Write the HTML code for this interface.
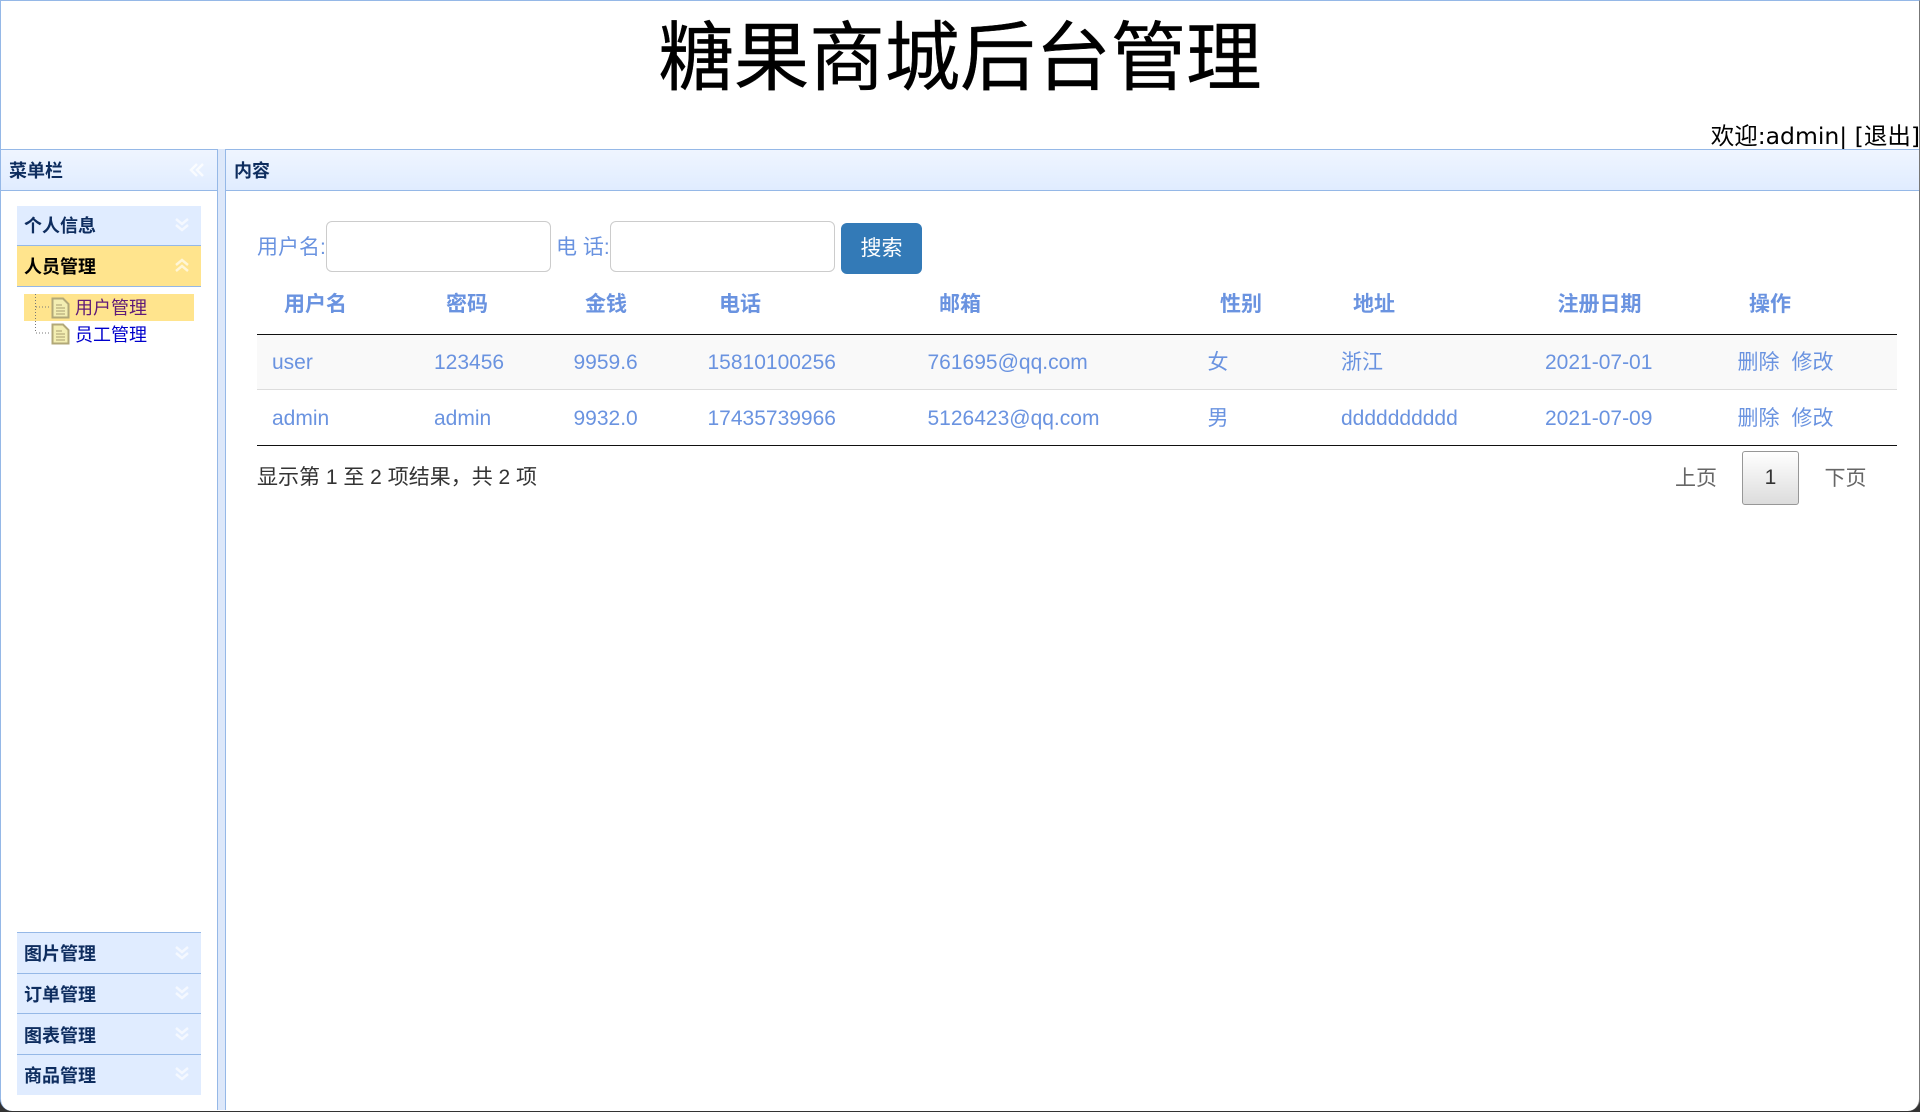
<!DOCTYPE html>
<html lang="zh">
<head>
<meta charset="utf-8">
<title>糖果商城后台管理</title>
<style>
html,body{margin:0;padding:0;background:#333;}
body{width:1920px;height:1112px;position:relative;overflow:hidden;font-family:"Liberation Sans","Noto Sans CJK SC",sans-serif;}
.a{position:absolute;white-space:nowrap;}
#page{position:absolute;left:0;top:0;width:1918px;height:1110px;background:#fff;border-left:1px solid #95b8e7;border-top:1px solid #95b8e7;border-right:1px solid #777;border-radius:0 0 12px 12px;}
.t{line-height:30px;height:30px;}
.head{background:linear-gradient(to bottom,#eff5ff,#e0ecff);border-top:1px solid #95b8e7;border-bottom:1px solid #95b8e7;height:40px;top:149px;}
.hd{font-weight:bold;font-size:18px;color:#0e2d5f;}
.acc{left:17px;width:184px;background:#e0ecff;}
.acc.on{background:#ffe48d;}
.line{border-top:1px solid #95b8e7;}
.c{color:#6a93e0;font-size:21px;}
.th{color:#6a93e0;font-size:21px;font-weight:bold;}
input{position:absolute;box-sizing:border-box;border:1px solid #ccc;border-radius:6px;background:#fff;height:51px;width:225px;top:221px;margin:0;padding:0;}
</style>
</head>
<body>
<div id="page"></div>

<div class="a" style="left:0;top:13px;width:1920px;text-align:center;font-size:75.400px;line-height:90px;color:#000;-webkit-text-stroke:.4px #000;">糖果商城后台管理</div>
<div class="a" style="right:0;top:121px;font-family:'DejaVu Sans','Noto Sans CJK SC',sans-serif;font-size:23.500px;line-height:30px;color:#000;">欢迎:admin| [退出]</div>

<!-- panels -->
<div class="a head" style="left:1px;width:216px;"></div>
<div class="a head" style="left:225px;width:1694px;"></div>
<div class="a" style="left:217px;top:149px;width:7px;height:961px;background:#dde8fa;border-left:1px solid #95b8e7;border-right:1px solid #95b8e7;"></div>
<div class="a t hd" style="left:9px;top:156px;">菜单栏</div>
<div class="a t hd" style="left:234px;top:156px;">内容</div>
<svg class="a" style="left:189px;top:162px;" width="16" height="16" viewBox="0 0 16 16" fill="none" stroke="#fff" stroke-opacity=".75" stroke-width="2.500"><path d="M8 2L2 8l6 6M14 2L8 8l6 6"/></svg>

<!-- accordion -->
<div class="a acc" style="top:206px;height:39px;"></div>
<div class="a acc on line" style="top:245px;height:40px;"></div>
<div class="a" style="left:17px;top:286px;width:184px;height:1px;background:#95b8e7;"></div>
<div class="a t hd" style="left:24px;top:211px;">个人信息</div>
<div class="a t hd" style="left:24px;top:252px;color:#000;">人员管理</div>
<svg class="a" style="left:174px;top:217px;" width="16" height="16" viewBox="0 0 16 16" fill="none" stroke="#fff" stroke-opacity=".65" stroke-width="2.500"><path d="M2 2l6 5 6-5M2 8l6 5 6-5"/></svg>
<svg class="a" style="left:174px;top:257px;" width="16" height="16" viewBox="0 0 16 16" fill="none" stroke="#fff" stroke-opacity=".65" stroke-width="2.500"><path d="M2 8l6-5 6 5M2 14l6-5 6 5"/></svg>

<div class="a" style="left:24px;top:294px;width:170px;height:27px;background:#ffe48d;"></div>
<svg class="a" style="left:30px;top:294px;" width="42" height="54" viewBox="0 0 42 54" fill="none">
<path d="M5.500 0V39M6 13H20M6 39H20" stroke="#777" stroke-dasharray="1 2"/>
<path d="M22.500 4.500H33L38.500 10V23.500H22.500Z" fill="#f3eeb2" stroke="#b2a878" stroke-width="2"/>
<path d="M26 11H32M26 14H35M26 17H35M26 20H35" stroke="#a89e70"/>
<path d="M22.500 30.500H33L38.500 36V49.500H22.500Z" fill="#f3eeb2" stroke="#b2a878" stroke-width="2"/>
<path d="M26 37H32M26 40H35M26 43H35M26 46H35" stroke="#a89e70"/>
</svg>
<div class="a t" style="left:75px;top:293px;font-size:18px;color:#5f1a78;">用户管理</div>
<div class="a t" style="left:75px;top:320px;font-size:18px;color:#0000cc;">员工管理</div>

<div class="a acc line" style="top:932px;height:40px;"></div>
<div class="a acc line" style="top:973px;height:39px;"></div>
<div class="a acc line" style="top:1013px;height:40px;"></div>
<div class="a acc line" style="top:1054px;height:40px;"></div>
<div class="a t hd" style="left:24px;top:939px;">图片管理</div>
<div class="a t hd" style="left:24px;top:980px;">订单管理</div>
<div class="a t hd" style="left:24px;top:1021px;">图表管理</div>
<div class="a t hd" style="left:24px;top:1061px;">商品管理</div>
<svg class="a" style="left:174px;top:945px;" width="16" height="16" viewBox="0 0 16 16" fill="none" stroke="#fff" stroke-opacity=".65" stroke-width="2.500"><path d="M2 2l6 5 6-5M2 8l6 5 6-5"/></svg>
<svg class="a" style="left:174px;top:985px;" width="16" height="16" viewBox="0 0 16 16" fill="none" stroke="#fff" stroke-opacity=".65" stroke-width="2.500"><path d="M2 2l6 5 6-5M2 8l6 5 6-5"/></svg>
<svg class="a" style="left:174px;top:1026px;" width="16" height="16" viewBox="0 0 16 16" fill="none" stroke="#fff" stroke-opacity=".65" stroke-width="2.500"><path d="M2 2l6 5 6-5M2 8l6 5 6-5"/></svg>
<svg class="a" style="left:174px;top:1066px;" width="16" height="16" viewBox="0 0 16 16" fill="none" stroke="#fff" stroke-opacity=".65" stroke-width="2.500"><path d="M2 2l6 5 6-5M2 8l6 5 6-5"/></svg>

<!-- search -->
<div class="a t c" style="left:257px;top:233px;">用户名:</div>
<input type="text" style="left:326px;">
<div class="a t c" style="left:556px;top:233px;">电 话:</div>
<input type="text" style="left:610px;">
<div class="a" style="left:841px;top:223px;width:81px;height:51px;background:#337ab7;border-radius:6px;color:#fff;font-size:21px;line-height:51px;text-align:center;">搜索</div>

<!-- table -->
<div class="a" style="left:257px;top:334px;width:1640px;height:55px;background:#f9f9f9;"></div>
<div class="a" style="left:257px;top:334px;width:1640px;height:1px;background:#111;"></div>
<div class="a" style="left:257px;top:389px;width:1640px;height:1px;background:#ddd;"></div>
<div class="a" style="left:257px;top:445px;width:1640px;height:1px;background:#111;"></div>

<div class="a t th" style="left:284px;top:290px;">用户名</div>
<div class="a t th" style="left:446px;top:290px;">密码</div>
<div class="a t th" style="left:585px;top:290px;">金钱</div>
<div class="a t th" style="left:719px;top:290px;">电话</div>
<div class="a t th" style="left:939px;top:290px;">邮箱</div>
<div class="a t th" style="left:1220px;top:290px;">性别</div>
<div class="a t th" style="left:1353px;top:290px;">地址</div>
<div class="a t th" style="left:1557.500px;top:290px;">注册日期</div>
<div class="a t th" style="left:1749px;top:290px;">操作</div>

<div class="a t c" style="left:272px;top:348px;">user</div>
<div class="a t c" style="left:434px;top:348px;">123456</div>
<div class="a t c" style="left:573.500px;top:348px;">9959.6</div>
<div class="a t c" style="left:707.500px;top:348px;">15810100256</div>
<div class="a t c" style="left:927.500px;top:348px;">761695@qq.com</div>
<div class="a t c" style="left:1207.500px;top:348px;">女</div>
<div class="a t c" style="left:1341px;top:348px;">浙江</div>
<div class="a t c" style="left:1545px;top:348px;">2021-07-01</div>
<div class="a t c" style="left:1737.500px;top:348px;">删除</div>
<div class="a t c" style="left:1791.500px;top:348px;">修改</div>

<div class="a t c" style="left:272px;top:404px;">admin</div>
<div class="a t c" style="left:434px;top:404px;">admin</div>
<div class="a t c" style="left:573.500px;top:404px;">9932.0</div>
<div class="a t c" style="left:707.500px;top:404px;">17435739966</div>
<div class="a t c" style="left:927.500px;top:404px;">5126423@qq.com</div>
<div class="a t c" style="left:1207.500px;top:404px;">男</div>
<div class="a t c" style="left:1341px;top:404px;">dddddddddd</div>
<div class="a t c" style="left:1545px;top:404px;">2021-07-09</div>
<div class="a t c" style="left:1737.500px;top:404px;">删除</div>
<div class="a t c" style="left:1791.500px;top:404px;">修改</div>

<!-- footer -->
<div class="a t" style="left:257px;top:463px;font-size:21px;color:#333;">显示第 1 至 2 项结果，共 2 项</div>
<div class="a t" style="left:1675px;top:464px;font-size:21px;color:#666;">上页</div>
<div class="a" style="left:1742px;top:451px;width:55px;height:52px;border:1px solid #979797;border-radius:3px;background:linear-gradient(to bottom,#fff,#dcdcdc);color:#333;font-size:21px;line-height:52px;text-align:center;">1</div>
<div class="a t" style="left:1824.500px;top:464px;font-size:21px;color:#666;">下页</div>
</body>
</html>
